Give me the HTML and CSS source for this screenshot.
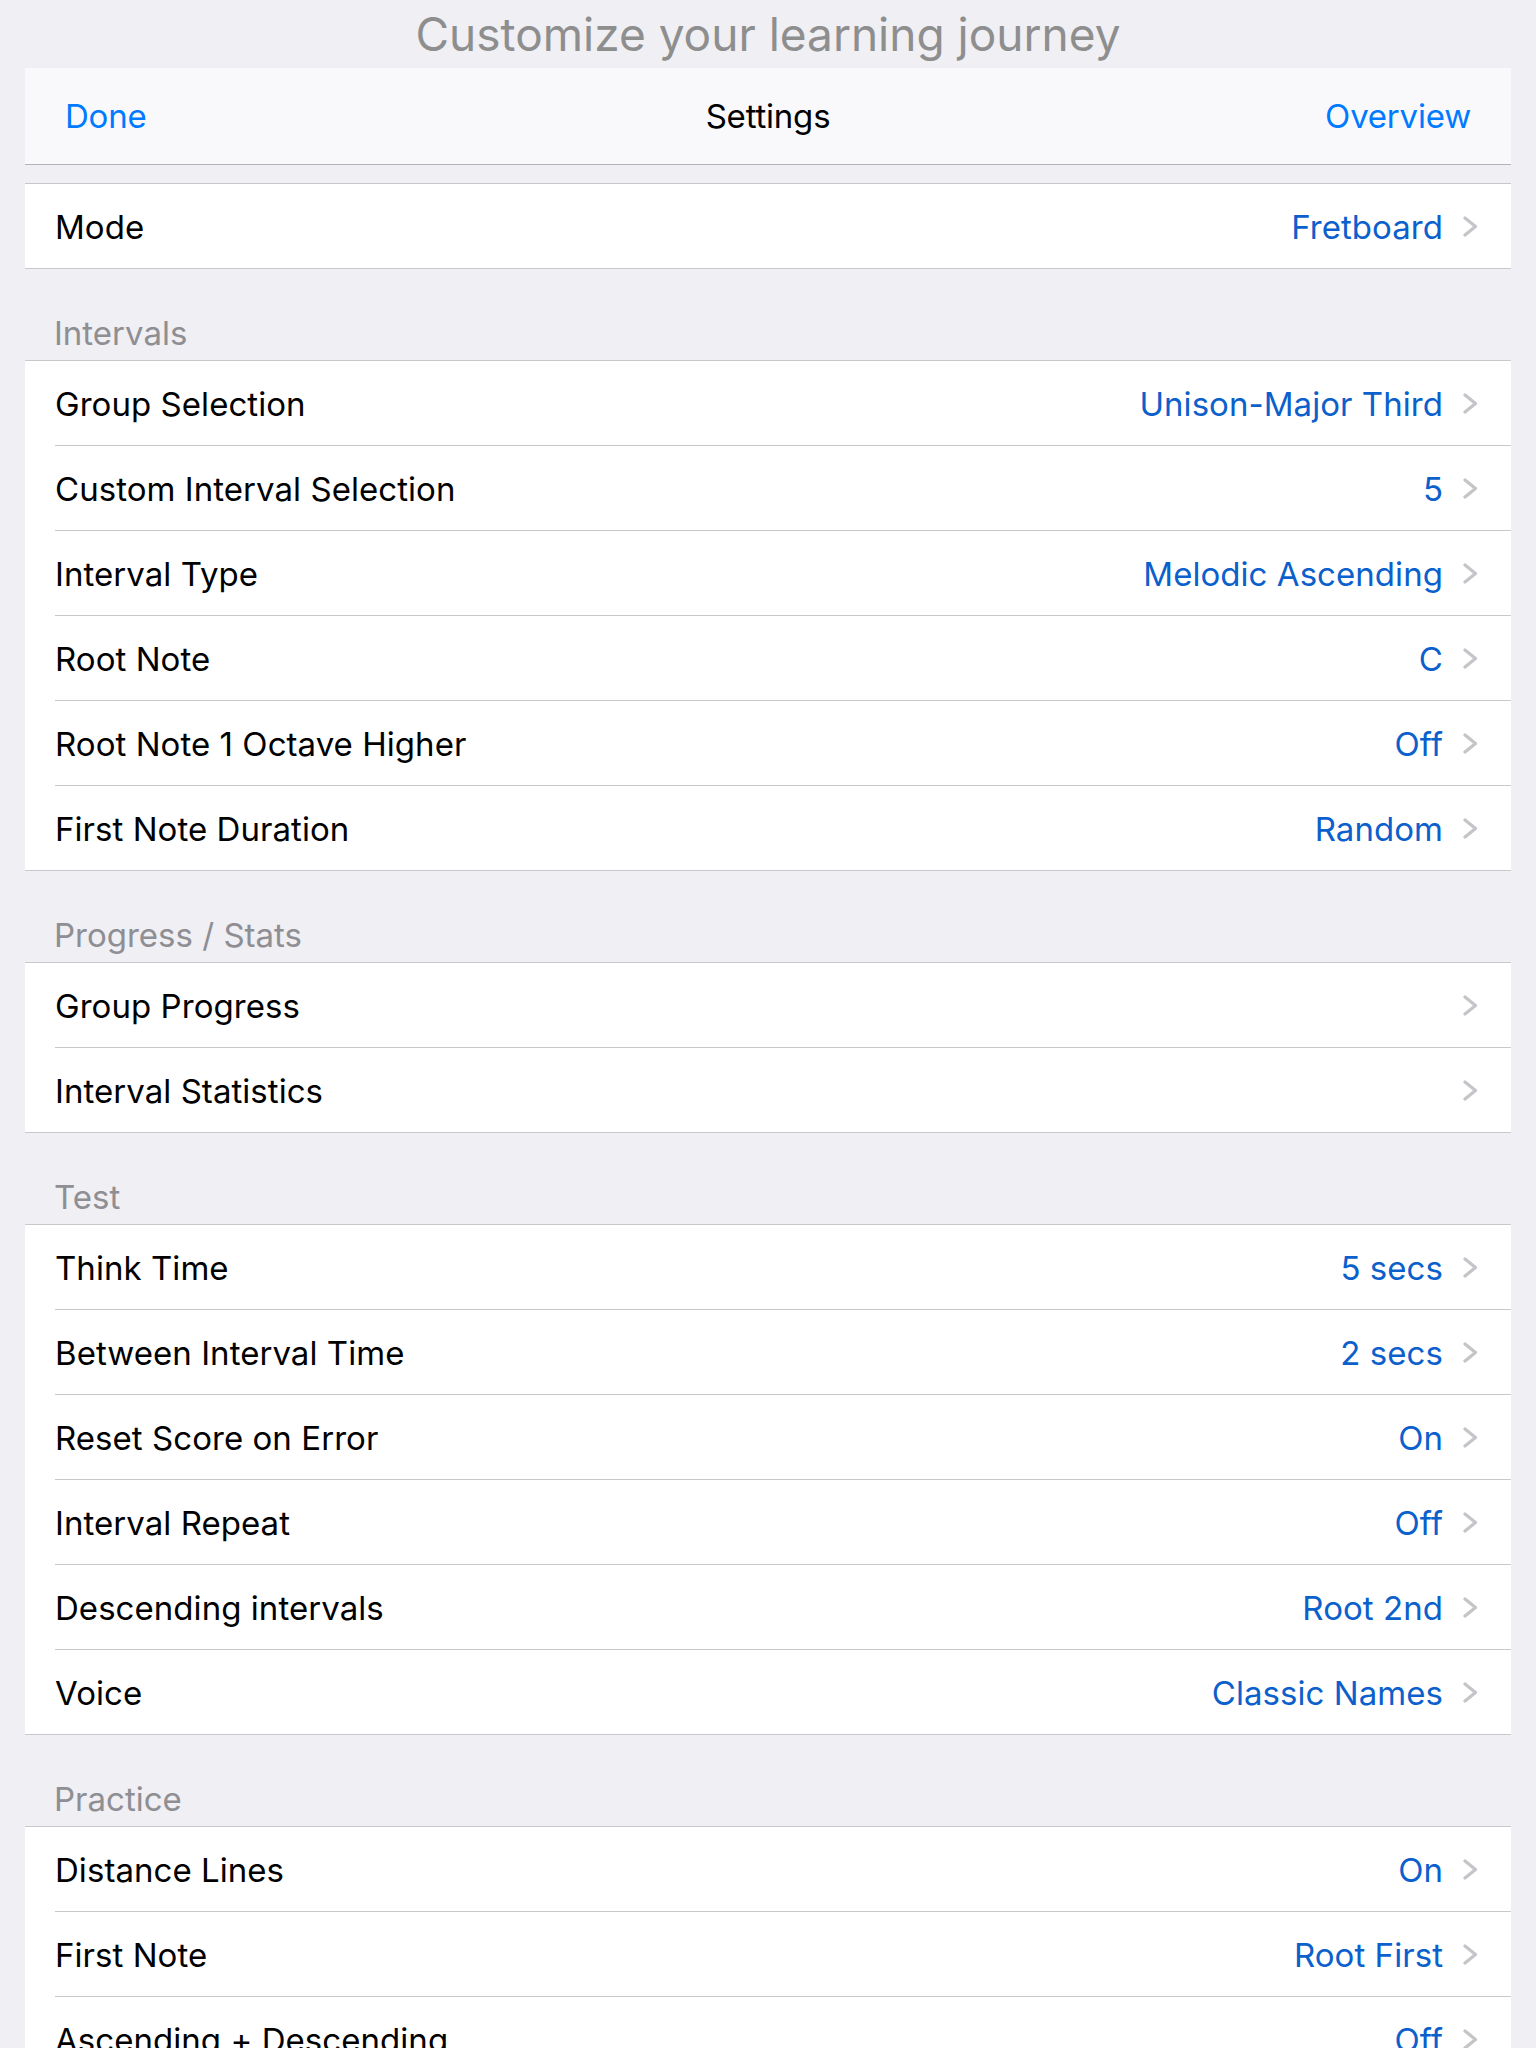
FILE: index.html
```html
<!DOCTYPE html>
<html lang="en">
<head>
<meta charset="utf-8">
<title>Settings</title>
<link rel="stylesheet" href="styles.css">
</head>
<body>
<h1 class="page-title">Customize your learning journey</h1>
<div class="sheet">
  <header class="navbar">
    <span class="nav-btn">Done</span>
    <span class="nav-title">Settings</span>
    <span class="nav-btn">Overview</span>
  </header>

  <div class="top-gap"></div>
  <section class="group">
    <div class="row"><div class="row-body"><span class="label">Mode</span><span class="value">Fretboard</span><svg class="chev" viewBox="0 0 15 21"><path d="M2 2 L12.5 10.5 L2 19"/></svg></div></div>
  </section>

  <div class="section-header">Intervals</div>
  <section class="group">
    <div class="row"><div class="row-body"><span class="label">Group Selection</span><span class="value">Unison-Major Third</span><svg class="chev" viewBox="0 0 15 21"><path d="M2 2 L12.5 10.5 L2 19"/></svg></div></div>
    <div class="row"><div class="row-body"><span class="label">Custom Interval Selection</span><span class="value">5</span><svg class="chev" viewBox="0 0 15 21"><path d="M2 2 L12.5 10.5 L2 19"/></svg></div></div>
    <div class="row"><div class="row-body"><span class="label">Interval Type</span><span class="value">Melodic Ascending</span><svg class="chev" viewBox="0 0 15 21"><path d="M2 2 L12.5 10.5 L2 19"/></svg></div></div>
    <div class="row"><div class="row-body"><span class="label">Root Note</span><span class="value">C</span><svg class="chev" viewBox="0 0 15 21"><path d="M2 2 L12.5 10.5 L2 19"/></svg></div></div>
    <div class="row"><div class="row-body"><span class="label">Root Note 1 Octave Higher</span><span class="value">Off</span><svg class="chev" viewBox="0 0 15 21"><path d="M2 2 L12.5 10.5 L2 19"/></svg></div></div>
    <div class="row"><div class="row-body"><span class="label">First Note Duration</span><span class="value">Random</span><svg class="chev" viewBox="0 0 15 21"><path d="M2 2 L12.5 10.5 L2 19"/></svg></div></div>
  </section>

  <div class="section-header">Progress / Stats</div>
  <section class="group">
    <div class="row"><div class="row-body"><span class="label">Group Progress</span><svg class="chev" viewBox="0 0 15 21"><path d="M2 2 L12.5 10.5 L2 19"/></svg></div></div>
    <div class="row"><div class="row-body"><span class="label">Interval Statistics</span><svg class="chev" viewBox="0 0 15 21"><path d="M2 2 L12.5 10.5 L2 19"/></svg></div></div>
  </section>

  <div class="section-header">Test</div>
  <section class="group">
    <div class="row"><div class="row-body"><span class="label">Think Time</span><span class="value">5 secs</span><svg class="chev" viewBox="0 0 15 21"><path d="M2 2 L12.5 10.5 L2 19"/></svg></div></div>
    <div class="row"><div class="row-body"><span class="label">Between Interval Time</span><span class="value">2 secs</span><svg class="chev" viewBox="0 0 15 21"><path d="M2 2 L12.5 10.5 L2 19"/></svg></div></div>
    <div class="row"><div class="row-body"><span class="label">Reset Score on Error</span><span class="value">On</span><svg class="chev" viewBox="0 0 15 21"><path d="M2 2 L12.5 10.5 L2 19"/></svg></div></div>
    <div class="row"><div class="row-body"><span class="label">Interval Repeat</span><span class="value">Off</span><svg class="chev" viewBox="0 0 15 21"><path d="M2 2 L12.5 10.5 L2 19"/></svg></div></div>
    <div class="row"><div class="row-body"><span class="label">Descending intervals</span><span class="value">Root 2nd</span><svg class="chev" viewBox="0 0 15 21"><path d="M2 2 L12.5 10.5 L2 19"/></svg></div></div>
    <div class="row"><div class="row-body"><span class="label">Voice</span><span class="value">Classic Names</span><svg class="chev" viewBox="0 0 15 21"><path d="M2 2 L12.5 10.5 L2 19"/></svg></div></div>
  </section>

  <div class="section-header">Practice</div>
  <section class="group">
    <div class="row"><div class="row-body"><span class="label">Distance Lines</span><span class="value">On</span><svg class="chev" viewBox="0 0 15 21"><path d="M2 2 L12.5 10.5 L2 19"/></svg></div></div>
    <div class="row"><div class="row-body"><span class="label">First Note</span><span class="value">Root First</span><svg class="chev" viewBox="0 0 15 21"><path d="M2 2 L12.5 10.5 L2 19"/></svg></div></div>
    <div class="row"><div class="row-body"><span class="label">Ascending + Descending</span><span class="value">Off</span><svg class="chev" viewBox="0 0 15 21"><path d="M2 2 L12.5 10.5 L2 19"/></svg></div></div>
  </section>
</div>
</body>
</html>
```

FILE: styles.css
```css
* { box-sizing: content-box; }

html, body {
  margin: 0;
  padding: 0;
  background: #efeff4;
}

body {
  font-family: Inter, "Liberation Sans", sans-serif;
  -webkit-font-smoothing: antialiased;
  overflow: hidden;
  height: 2048px;
}

.page-title {
  margin: 0;
  height: 68px;
  display: flex;
  align-items: center;
  justify-content: center;
  font-size: 46px;
  font-weight: 400;
  color: #8e8e8e;
  letter-spacing: 0;
}

.sheet {
  margin: 0 25px;
}

.navbar {
  height: 96px;
  background: #f9f9fb;
  border-bottom: 1px solid #b4b4b8;
  display: flex;
  align-items: center;
  justify-content: space-between;
  padding: 0 40px;
  font-size: 33px;
  letter-spacing: -0.2px;
}

.nav-btn {
  color: #007aff;
  width: 200px;
}

.nav-btn:last-child {
  text-align: right;
}

.nav-title {
  color: #000;
}

.top-gap {
  height: 18px;
}

.group {
  background: #fff;
  border-top: 1px solid #c8c7cc;
  border-bottom: 1px solid #c8c7cc;
}

.row {
  padding-left: 30px;
}

.row + .row .row-body {
  border-top: 1px solid #c8c7cc;
}

.row-body {
  height: 83px;
  padding-top: 1px;
  display: flex;
  align-items: center;
  padding-right: 33px;
  font-size: 33px;
  letter-spacing: 0.05px;
}

.label {
  color: #000;
  flex: 1;
}

.value {
  color: #0b60cc;
  margin-right: 20px;
}

.chev {
  width: 15px;
  height: 21px;
  fill: none;
  stroke: #c4c4c9;
  stroke-width: 3.2;
  stroke-linecap: round;
  stroke-linejoin: round;
}

.section-header {
  height: 91px;
  box-sizing: border-box;
  padding: 0 0 7px 29px;
  display: flex;
  align-items: flex-end;
  font-size: 33px;
  line-height: 40px;
  letter-spacing: 0;
  color: #8e8e93;
}
```
